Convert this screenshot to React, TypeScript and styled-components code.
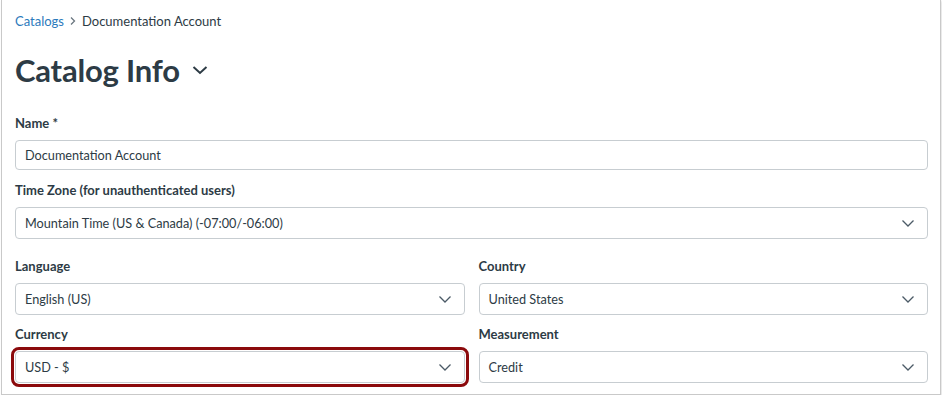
import React from "react";
import styled, { createGlobalStyle } from "styled-components";

const Global = createGlobalStyle`
  html, body { margin: 0; padding: 0; background: #ffffff; }
  body { font-family: Lato, "Open Sans", sans-serif; color: #2d3b45; }
  * { box-sizing: border-box; }
`;

const Frame = styled.div`
  width: 940px;
  height: 395px;
  margin-left: 1px;
  border-left: 1px solid #c9c9c9;
  border-right: 1px solid #c9c9c9;
  border-bottom: 1px solid #c9c9c9;
  box-shadow: 1px 1px 2px rgba(0, 0, 0, 0.12);
  padding: 12px 12px 0 13px;
  overflow: hidden;
`;

const Crumbs = styled.nav`
  display: flex;
  align-items: center;
  gap: 5px;
  height: 18px;
  font-size: 13px;
  line-height: 18px;
  color: #2d3b45;
`;

const CrumbLink = styled.a`
  color: #2b7abc;
  text-decoration: none;
`;

const Title = styled.h1`
  display: flex;
  align-items: center;
  gap: 12px;
  margin: 22px 0 0;
  height: 36px;
  font-size: 31px;
  font-weight: 700;
  line-height: 36px;
  color: #2d3b45;
  letter-spacing: -0.2px;
`;

const Form = styled.div`
  display: flex;
  flex-direction: column;
  margin-top: 26px;
`;

const Row = styled.div<{ $gapTop?: number }>`
  display: grid;
  grid-template-columns: 1fr 1fr;
  column-gap: 14px;
  margin-top: ${(p) => p.$gapTop ?? 0}px;
`;

const Field = styled.div<{ $gapTop?: number }>`
  display: flex;
  flex-direction: column;
  margin-top: ${(p) => p.$gapTop ?? 0}px;
`;

const Label = styled.label`
  font-size: 13px;
  font-weight: 700;
  line-height: 18px;
  color: #2d3b45;
  margin-bottom: 8px;
`;

const Box = styled.div<{ $h?: number; $focus?: boolean }>`
  position: relative;
  display: flex;
  align-items: center;
  justify-content: space-between;
  height: ${(p) => p.$h ?? 32}px;
  padding: 0 12px 0 9px;
  border: 1px solid #c7cdd1;
  border-radius: 4px;
  background: #fff;
  font-size: 12.7px;
  color: #2d3b45;
  ${(p) =>
    p.$focus
      ? `
    &::after {
      content: "";
      position: absolute;
      inset: -5px -5px -5px -5px;
      border: 3px solid #8b0a0c;
      border-radius: 8px;
      pointer-events: none;
    }
  `
      : ""}
`;

const Chevron = ({ size = 14, stroke = 1.3 }: { size?: number; stroke?: number }) => (
  <svg width={size} height={size} viewBox="0 0 14 14" fill="none">
    <path d="M1.5 4.5 L7 10 L12.5 4.5" stroke="#4b5a66" strokeWidth={stroke} />
  </svg>
);

const CrumbSep = () => (
  <svg width="8" height="10" viewBox="0 0 8 10" fill="none">
    <path d="M2 1.5 L5.5 5 L2 8.5" stroke="#6b7780" strokeWidth="1.3" />
  </svg>
);

const TitleChevron = () => (
  <svg width="16" height="10" viewBox="0 0 16 10" fill="none">
    <path d="M1.5 2 L8 8 L14.5 2" stroke="#2d3b45" strokeWidth="2" />
  </svg>
);

const Select = ({ value, focus }: { value: string; focus?: boolean }) => (
  <Box $focus={focus}>
    <span>{value}</span>
    <Chevron />
  </Box>
);

export default function App() {
  return (
    <>
      <Global />
      <Frame>
        <Crumbs>
          <CrumbLink href="#">Catalogs</CrumbLink>
          <CrumbSep />
          <span>Documentation Account</span>
        </Crumbs>
        <Title>
          Catalog Info
          <TitleChevron />
        </Title>
        <Form>
          <Field>
            <Label>Name *</Label>
            <Box $h={30}>
              <span>Documentation Account</span>
            </Box>
          </Field>
          <Field $gapTop={11}>
            <Label>Time Zone (for unauthenticated users)</Label>
            <Select value="Mountain Time (US & Canada) (-07:00/-06:00)" />
          </Field>
          <Row $gapTop={18}>
            <Field>
              <Label>Language</Label>
              <Select value="English (US)" />
            </Field>
            <Field>
              <Label>Country</Label>
              <Select value="United States" />
            </Field>
          </Row>
          <Row $gapTop={10}>
            <Field>
              <Label>Currency</Label>
              <Select value="USD - $" focus />
            </Field>
            <Field>
              <Label>Measurement</Label>
              <Select value="Credit" />
            </Field>
          </Row>
        </Form>
      </Frame>
    </>
  );
}
